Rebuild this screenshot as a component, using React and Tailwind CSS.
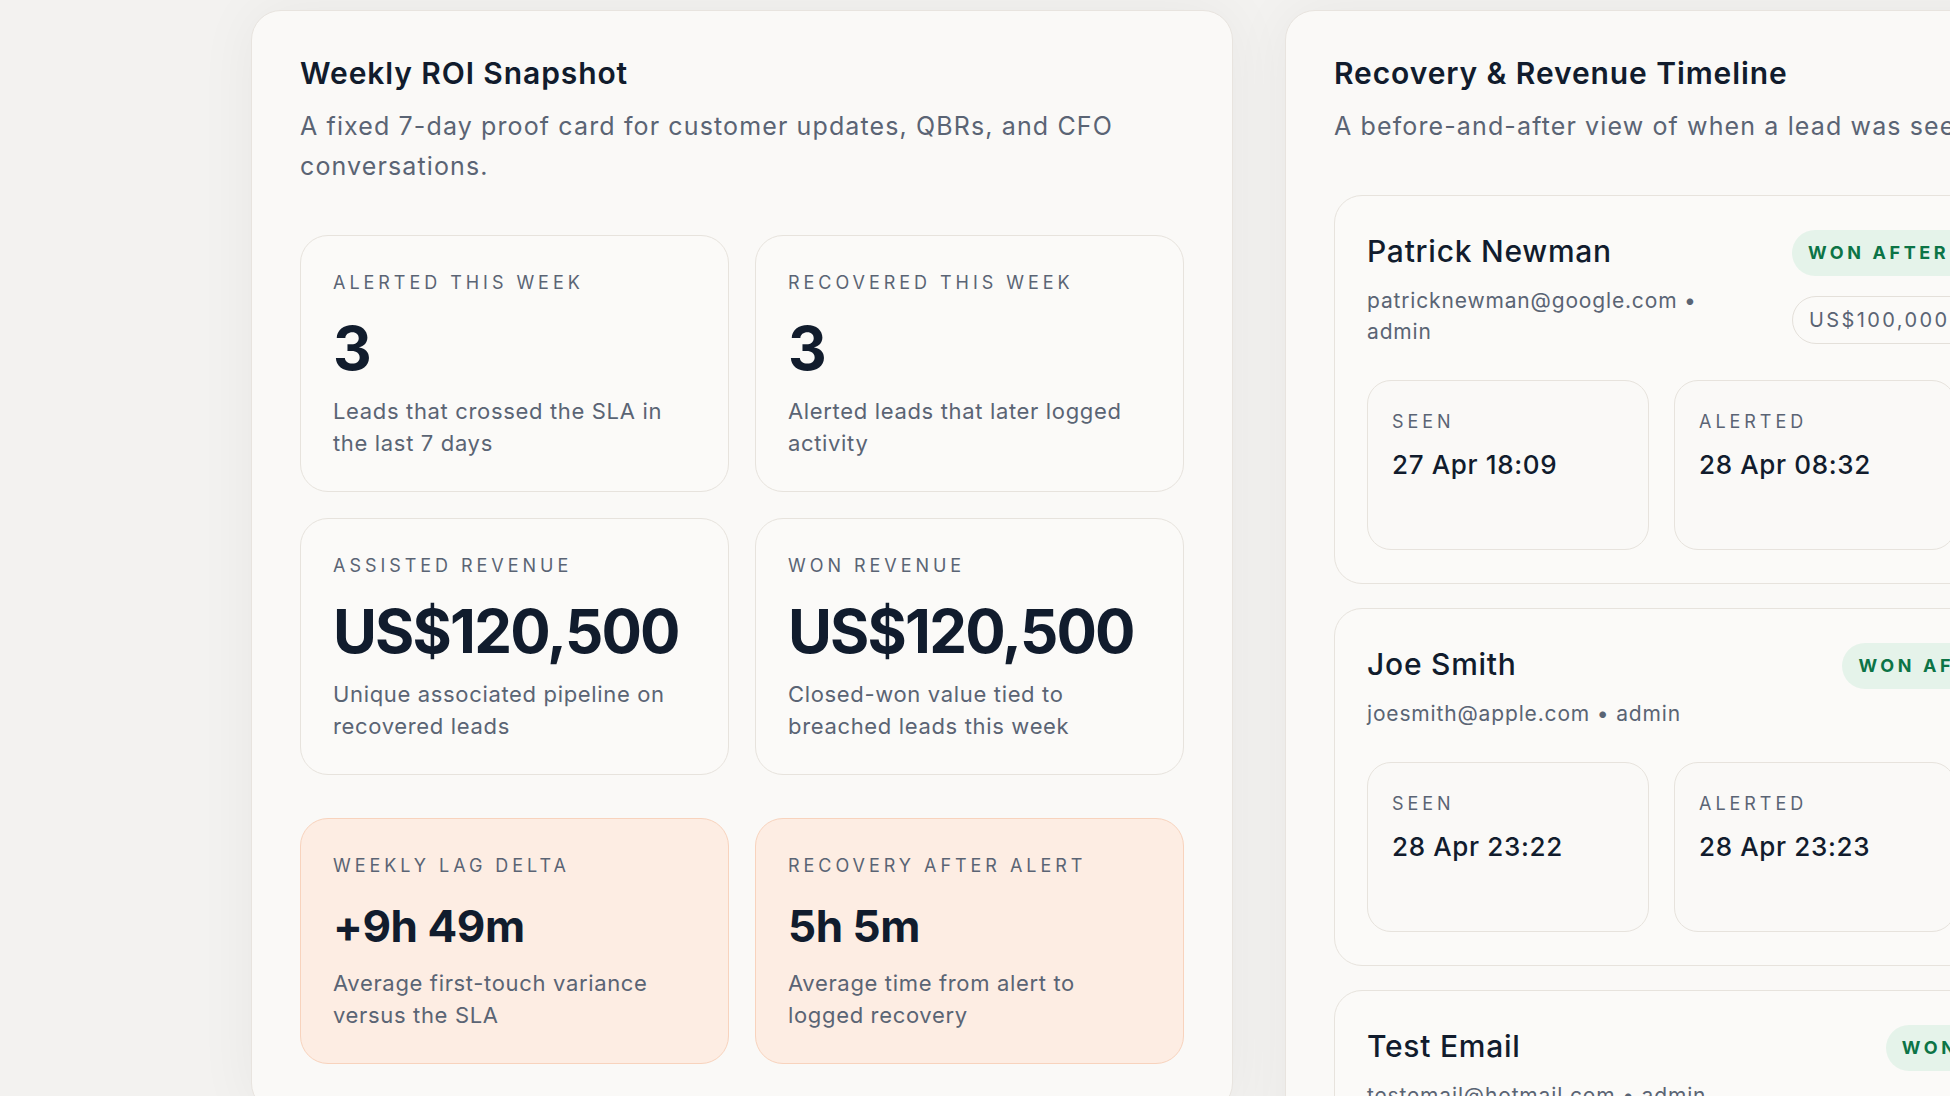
import React from 'react';

const stats = [
  { label: 'Alerted this week', value: '3', desc: 'Leads that crossed the SLA in the last 7 days' },
  { label: 'Recovered this week', value: '3', desc: 'Alerted leads that later logged activity' },
  { label: 'Assisted revenue', value: 'US$120,500', desc: 'Unique associated pipeline on recovered leads' },
  { label: 'Won revenue', value: 'US$120,500', desc: 'Closed-won value tied to breached leads this week' },
];

const lagStats = [
  { label: 'Weekly lag delta', value: '+9h 49m', desc: 'Average first-touch variance versus the SLA' },
  { label: 'Recovery after alert', value: '5h 5m', desc: 'Average time from alert to logged recovery' },
];

const leads = [
  {
    name: 'Patrick Newman',
    email: 'patricknewman@google.com • admin',
    badge: 'Won after recovery',
    amount: 'US$100,000 won',
    cells: [
      ['Seen', '27 Apr 18:09'],
      ['Alerted', '28 Apr 08:32'],
      ['Recovered', '28 Apr 11:47'],
      ['Won', '30 Apr 16:05'],
    ],
  },
  {
    name: 'Joe Smith',
    email: 'joesmith@apple.com • admin',
    badge: 'Won after alert',
    cells: [
      ['Seen', '28 Apr 23:22'],
      ['Alerted', '28 Apr 23:23'],
      ['Recovered', '29 Apr 09:10'],
      ['Won', '01 May 12:00'],
    ],
  },
  {
    name: 'Test Email',
    email: 'testemail@hotmail.com • admin',
    badge: 'Won with SLA',
    cells: [
      ['Seen', '29 Apr 10:02'],
      ['Alerted', '29 Apr 14:40'],
      ['Recovered', '29 Apr 15:31'],
      ['Won', '02 May 09:15'],
    ],
  },
];

function StatCard({ stat, warm }) {
  return (
    <div
      className={`rounded-[28px] border px-8 pt-[33px] pb-8 ${
        warm ? 'bg-[#fdede3] border-[#f8d3bd]' : 'bg-[#fbfaf8] border-[#e7e3dd]'
      }`}
    >
      <div className="text-[18px] leading-[28px] uppercase tracking-[0.22em] text-[#5a6474]">{stat.label}</div>
      {warm ? (
        <div className="mt-[24px] text-[44px] leading-[44px] font-bold tracking-[-0.01em] text-[#111c2d]">{stat.value}</div>
      ) : (
        <div className="mt-[21px] text-[60px] leading-[60px] font-bold tracking-[-0.03em] text-[#111c2d]">{stat.value}</div>
      )}
      <p className={`${warm ? 'mt-[19px]' : 'mt-[17px]'} text-[22px] leading-[32px] tracking-[0.03em] text-[#5a6474]`}>
        {stat.desc}
      </p>
    </div>
  );
}

function LeadCard({ lead }) {
  return (
    <div className="rounded-[28px] border border-[#e7e3dd] bg-[#fbfaf8] px-8 pt-8 pb-[33px]">
      <div className="flex max-w-[733px] items-start justify-between">
        <div className="w-[400px] min-w-0">
          <div className="text-[30px] leading-[46px] font-medium tracking-[0.025em] text-[#111c2d]">{lead.name}</div>
          <div className="mt-[11px] text-[21px] leading-[31px] tracking-[0.04em] text-[#5a6474]">{lead.email}</div>
        </div>
        <div className="mt-[2px] flex flex-col gap-[20px]">
          <span className="rounded-full bg-[#e5f3ea] px-4 text-[18px] leading-[46px] font-bold uppercase tracking-[0.2em] text-[#0c7446]">
            {lead.badge}
          </span>
          {lead.amount && (
            <span className="rounded-full border border-[#e4e0da] px-4 text-[20px] leading-[46px] tracking-[0.12em] text-[#5a6474]">
              {lead.amount}
            </span>
          )}
        </div>
      </div>
      <div className="mt-[33px] grid grid-cols-[repeat(4,282px)] gap-[25px]">
        {lead.cells.map(([label, value]) => (
          <div key={label} className="min-h-[170px] rounded-[24px] border border-[#e7e3dd] bg-[#faf9f7] px-6 pt-[28px] pb-6">
            <div className="text-[18px] leading-[26px] uppercase tracking-[0.22em] text-[#5a6474]">{label}</div>
            <div className="mt-[12px] text-[26px] leading-[36px] font-medium tracking-[0.025em] text-[#111c2d]">{value}</div>
          </div>
        ))}
      </div>
    </div>
  );
}

export default function App() {
  return (
    <div
      className="flex h-screen w-screen items-start gap-[52px] overflow-hidden bg-[#f3f2f0] pl-[251px] pt-[10px]"
      style={{ fontFamily: 'Inter, "Noto Sans", sans-serif' }}
    >
      <section className="w-[982px] shrink-0 rounded-[30px] border border-[#e8e4df] bg-[#faf9f7] px-12 pt-[44px] pb-12 shadow-[0_0_60px_rgba(0,0,0,0.05)]">
        <h2 className="text-[30px] leading-[36px] font-semibold tracking-[0.03em] text-[#111c2d]">Weekly ROI Snapshot</h2>
        <p className="mt-[15px] text-[25px] leading-[40px] tracking-[0.045em] text-[#5a6474]">
          A fixed 7-day proof card for customer updates, QBRs, and CFO conversations.
        </p>
        <div className="mt-[49px] grid grid-cols-2 gap-[26px]">
          {stats.map((s) => (
            <StatCard key={s.label} stat={s} />
          ))}
        </div>
        <div className="mt-[43px] grid grid-cols-2 gap-[26px]">
          {lagStats.map((s) => (
            <StatCard key={s.label} stat={s} warm />
          ))}
        </div>
      </section>

      <section className="w-[1367px] shrink-0 rounded-[30px] border border-[#e8e4df] bg-[#faf9f7] px-12 pt-[44px] pb-12 shadow-[0_0_60px_rgba(0,0,0,0.05)]">
        <h2 className="text-[30px] leading-[36px] font-semibold tracking-[0.03em] text-[#111c2d]">Recovery &amp; Revenue Timeline</h2>
        <p className="mt-[15px] text-[25px] leading-[40px] tracking-[0.045em] text-[#5a6474]">
          A before-and-after view of when a lead was seen, alerted, recovered and closed.
        </p>
        <div className="mt-[49px] flex flex-col gap-[24px]">
          {leads.map((l) => (
            <LeadCard key={l.name} lead={l} />
          ))}
        </div>
      </section>
    </div>
  );
}
